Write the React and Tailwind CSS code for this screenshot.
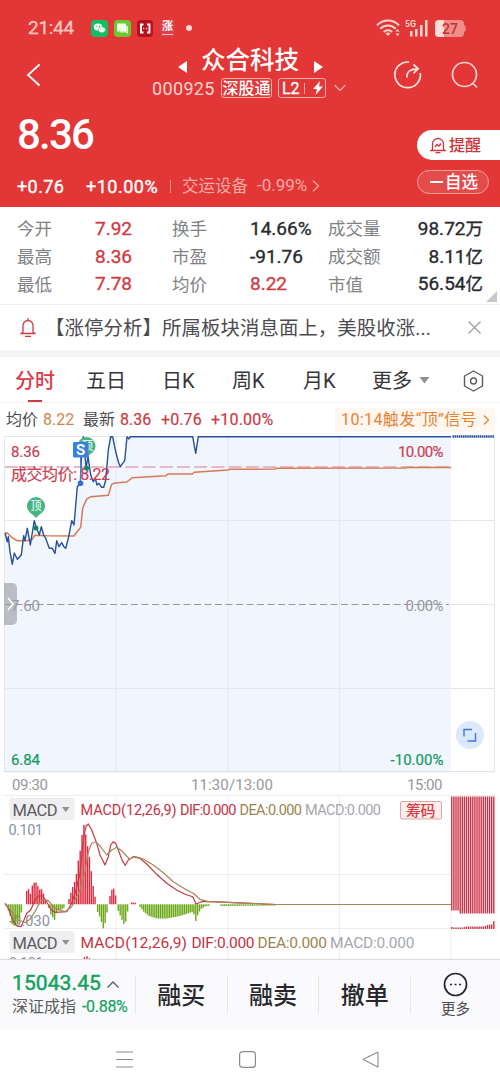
const gridX = [116, 228, 339.5, 451];

const priceLine =
  "5,533 7.3,541.7 8.3,536.7 10,551.7 12.3,564.3 14.3,553 17.3,559.3 21.3,555 23.7,535.7 25,540.7 27.3,528.3 30.3,545 34.3,520.7 36,526.7 39.3,535 41.3,526.7 43.7,535 45.7,538.3 49.3,548.3 52.3,548.3 55,553.3 56.7,540.7 59,546.7 61.7,542.7 64.3,547.3 65.7,548.3 68.7,536.7 71.7,520.7 74,525 77.3,486.7 80.3,483 81.7,450 83.3,436.7 86,468 88,456.7 90.7,475 93.3,481.7 95.3,478.3 97,485 99,483.3 101.7,487.3 103.7,487.3 105.7,480 108.3,450 110.7,436.7 112.7,437 115.7,451.7 118.3,461.7 120.3,466.7 124.7,460.7 127,436.7 129,439 130.3,436.7 192.7,436.7 195.7,453.3 198.3,436.7 451,436.7";

const avgLine =
  "5,533 7,532.7 11.7,537.3 17.3,540.7 26.7,540.7 32.3,539.3 34.7,535.3 46.7,535.7 74,536 76,533.3 80.7,527.3 82.7,508.3 86.7,499 90.7,496.7 108.3,495.3 111.7,484.3 115,483 126.7,482 132.3,477.7 166,475.7 167.7,474 192.3,474 194.3,472.3 228,470 230,469.3 275,469 277,468.3 405,468 407,467.5 451,467.5";

const difLine =
  "5,903.3 8.3,908.3 12.7,920 16.7,926 21,926.7 23.3,921.7 26.7,913.3 30.7,910 35,900 38.3,896 42.7,896 46.7,901.7 50.7,909.3 55,912.3 66.7,911.7 71.7,903.3 76,890 80,873.3 83.3,840 86,826 88.3,824 91.7,830 96.7,843.3 100,855 105,865 108.3,856.7 110.7,845 113.3,841.7 115.7,843.3 118.3,850 122.3,860.7 125.3,865.3 128.3,860 133.3,856.7 140,858.3 146.7,864 156.7,874.3 166.7,883.3 176.7,890 185,894.3 192.7,896.7 196,904 201.7,901.7 213.3,901.7 250,903.3 276,904.5";

const deaLine =
  "5,903.3 11.7,911.7 18.3,920 25,922.7 30,919.3 35,911.7 39.3,903.3 43.3,899.3 48.3,900.7 55,908.3 65,911.7 71.7,906.7 80,890 85,871.7 88.3,851.7 91.7,843.3 96,842 100,846 106.7,855 111.7,850 116.7,847.3 121.7,850.7 129.3,859 135,856.7 143.3,859 153.3,865 163.3,872.7 173.3,881.7 186.7,890 193.3,893.3 200,899.3 208.3,901.7 250,903.3 276,904.5 451,904.5";

// MACD histogram: each group is a list of [x, end y] around the zero line
const zeroY = 904.3;
const histogram = [
  [[6.5, 906], [10, 915], [12.5, 926], [18, 924], [20, 917], [23, 907]],
  [[26.7, 891], [28.5, 889], [30.5, 894], [32, 886], [35.3, 881], [38.3, 887], [40, 890], [42, 889], [45.5, 900]],
  [[49, 908], [51, 915], [54.7, 920], [57, 911], [61, 910], [65, 907]],
  [[69, 899], [72, 889], [76, 878], [77.3, 866], [81, 846], [82.3, 832], [84.5, 822], [86, 837], [90, 860], [92, 877], [94, 892], [96, 901]],
  [[97.7, 912], [101, 920], [102.7, 928], [104.3, 929], [106, 917], [108, 908]],
  [[110, 896], [113, 886], [116, 897]],
  [[118.3, 911], [120, 915], [123.7, 924], [125.5, 923], [127, 913], [129, 908]],
  [[131.5, 902.5], [137, 902.8]],
  [[140, 907], [144, 912], [149, 916], [157, 918.5], [167, 918.5], [180, 916], [192, 912], [194.5, 915], [196, 922], [198, 914], [201, 909], [205, 906.5], [209, 905.8]],
  [[221, 906], [276, 905.5]],
];

const bars = histogram.flatMap((group) => {
  const result = [];
  const last = group[group.length - 1][0];
  for (let x = group[0][0]; x <= last; x += 1.86) {
    const i = Math.max(1, group.findIndex((p) => p[0] >= x));
    const [x0, y0] = group[i - 1];
    const [x1, y1] = group[i];
    result.push([x, y0 + ((x - x0) / (x1 - x0)) * (y1 - y0)]);
  }
  return result;
});

const auctionBars = Array.from({ length: 21 }, (_, i) => 451.6 + i * 2.1);
const auctionSmall = [2, 1.5, 1.5, 1.5, 1.5, 1.5, 2, 2.5, 2.5, 2.5, 2.5, 2.5, 2.5, 2.5, 2.5, 2.5, 3, 4, 4.5, 4.5, 8];

const stats = [
  ["今开", "7.92", "换手", "14.66%", "成交量", "98.72万"],
  ["最高", "8.36", "市盈", "-91.76", "成交额", "8.11亿"],
  ["最低", "7.78", "均价", "8.22", "市值", "56.54亿"],
];

const StatusBar = () => (
  <div className="flex h-[56px] items-center pl-[28px] pr-[33px] text-[#ffc9c2]">
    <span className="w-[63px] pt-px text-[19px] tracking-[-0.3px] [-webkit-text-stroke:0.3px]">21:44</span>
    <div className="flex items-center gap-[6px]">
      <svg width="17" height="17" viewBox="0 0 17 17">
        <rect width="17" height="17" rx="4" fill="#12bf64" />
        <ellipse cx="7" cy="7" rx="4.2" ry="3.5" fill="#fff" />
        <ellipse cx="10.8" cy="9.8" rx="3.6" ry="3" fill="#fff" stroke="#12bf64" strokeWidth=".6" />
        <g fill="#12bf64">
          <circle cx="5.6" cy="6.2" r=".6" />
          <circle cx="8.4" cy="6.2" r=".6" />
          <circle cx="9.7" cy="9.1" r=".5" />
          <circle cx="12" cy="9.1" r=".5" />
        </g>
      </svg>
      <svg width="17" height="17" viewBox="0 0 17 17">
        <rect width="17" height="17" rx="4" fill="#6cc832" />
        <path d="M6 6h8v8l-2-1.5H6z" fill="#d5f3bd" />
        <path d="M3 3.5h9v7H6L3.800 12.500V10.500H3z" fill="#f4ffec" />
      </svg>
      <svg width="17" height="17" viewBox="0 0 17 17">
        <rect width="16" height="17" rx="4" fill="#b9101e" />
        <path d="M6.500 4.500H4v8h2.500M10 4.500h2.500v8H10" fill="none" stroke="#fff" strokeWidth="1.900" />
        <path d="M6.300 8.500h1M9.300 8.500h1" stroke="#fff" strokeWidth="1.500" />
      </svg>
      <div className="flex h-[17px] w-[15px] flex-col items-center rounded bg-[#dc404b] text-white">
        <span className="text-[11px] leading-[13px] font-bold">涨</span>
        <span className="mt-px h-px w-[11px] bg-[#f7c4c4]" />
      </div>
      <span className="ml-[5px] size-[6px] rounded-full bg-[#ffd9d4]" />
    </div>
    <div className="ml-auto flex items-center">
      <svg width="25" height="18" viewBox="0 0 25 18" fill="none" stroke="#ffd5cf" strokeWidth="2">
        <path d="M1 6.300C7-.2 17-.2 23 6.300M4.200 9.800c4.200-4.300 11.200-4.300 15.500 0M7.700 13c2.400-2.300 6.200-2.300 8.500 0" />
        <path d="M9.500 14.300L12 17l2.500-2.700c-1.500-1.200-3.500-1.200-5 0z" fill="#ffd5cf" stroke="none" />
        <path d="M21.500 10l2.200 2.600h-4.400zM21.500 17l2.200-2.600h-4.400z" fill="#ffd5cf" stroke="none" />
      </svg>
      <svg className="ml-[4px]" width="24" height="18" viewBox="0 0 24 18" fill="#ffd5cf">
        <text x="0" y="7.500" fontSize="9.500" fontWeight="600" textLength="11" lengthAdjust="spacingAndGlyphs">5G</text>
        <path d="M5 12h2.500v5.500H5zM10 10h2.500v7.500H10zM15 6h2.500v11.500H15zM20 1h2.500v16.500H20z" />
      </svg>
      <svg className="ml-[6px]" width="32" height="17" viewBox="0 0 32 17">
        <path d="M28.500 5c3 0 3 7 0 7z" fill="#f08d89" />
        <rect width="29" height="17" rx="4" fill="#f08d89" />
        <path d="M4 0h5v17H4a4 4 0 0 1-4-4V4a4 4 0 0 1 4-4z" fill="#ffdcd7" />
        <text x="7" y="13.500" fontSize="14" fontWeight="500" fill="#bd3239">27</text>
      </svg>
    </div>
  </div>
);

const Header = () => (
  <header className="h-[207px] bg-[#e33637] text-white">
    <StatusBar />
    <div className="-mt-[11px] flex h-[60px]">
      <svg className="mt-[18px] ml-[25px]" width="18" height="24" viewBox="0 0 18 24" fill="none" stroke="#fff" strokeWidth="1.800">
        <path d="M14.500 1.500L3 12l11.500 10.500" />
      </svg>
      <div className="ml-[109px] flex w-[196px] flex-col">
        <div className="flex h-[31px] items-center pl-[26px]">
          <svg className="mt-[13px]" width="9" height="12" viewBox="0 0 9 12" fill="#fff"><path d="M9 0v12L0 6z" /></svg>
          <span className="ml-[14px] w-[99px] pt-[1px] text-[24.5px] leading-[30px] font-medium">众合科技</span>
          <svg className="mt-[13px] ml-[14px]" width="9" height="12" viewBox="0 0 9 12" fill="#fff"><path d="M0 0v12l9-6z" /></svg>
        </div>
        <div className="flex h-[24px] items-center">
          <span className="w-[69px] text-[18px] tracking-[0.35px] text-[#ffd5d0]">000925</span>
          <span className="flex h-[20px] w-[51px] items-center justify-center rounded-[3px] border border-[#f7b4ae] pt-[2px] text-[16px] leading-none font-medium">深股通</span>
          <span className="ml-[6px] flex h-[20px] w-[48px] items-center rounded-[3px] border border-[#f7b4ae] pl-[3px] text-[16px] [-webkit-text-stroke:0.3px]">
            <span className="w-[19px] pt-px">L2</span>
            <span className="ml-[3px] h-[11px] w-px bg-[#f3a29d]" />
            <svg className="ml-[8px]" width="10" height="14" viewBox="0 0 10 14" fill="#fff"><path d="M7 0L0 8h4L2.500 14 10 5.500H6z" /></svg>
          </span>
          <svg className="ml-[8px]" width="12" height="8" viewBox="0 0 12 8" fill="none" stroke="#f3a29d" strokeWidth="1.300"><path d="M.5 1L6 6.500 11.500 1" /></svg>
        </div>
      </div>
      <svg className="mt-[15px] ml-[45px]" width="30" height="30" viewBox="0 0 30 30" fill="none" stroke="#ffe4e0" strokeWidth="1.700">
        <path d="M16 2.100A12.800 12.800 0 1 0 27.300 13" />
        <path d="M14 17.500c-.6-6 4-8.700 11-8.700M20.500 4.500l4.700 4.300-4.700 4.300" />
      </svg>
      <svg className="mt-[15px] ml-[28px]" width="30" height="30" viewBox="0 0 30 30" fill="none" stroke="#ffd5d0" strokeWidth="1.700">
        <circle cx="13.500" cy="14.500" r="12" />
        <path d="M21.500 23l4.500 4.500" />
      </svg>
    </div>
    <div className="flex h-[102px] justify-between">
      <div className="pl-[17px]">
        <div className="mt-[7px] h-[46px] text-[42px] leading-[46px] font-medium tracking-[-1.8px]">8.36</div>
        <div className="mt-[17px] flex h-[22px] items-center text-[18px] whitespace-nowrap">
          <span className="w-[69px] tracking-[0.4px] [-webkit-text-stroke:0.4px]">+0.76</span>
          <span className="w-[84px] tracking-[0.5px] [-webkit-text-stroke:0.4px]">+10.00%</span>
          <span className="h-[13px] w-px bg-[#f08884]" />
          <span className="ml-[11px] w-[75px] pt-[2px] text-[16.500px] text-[#f9aca6]">交运设备</span>
          <span className="w-[55px] text-[17px] text-[#f9aca6]">-0.99%</span>
          <svg width="8" height="12" viewBox="0 0 8 12" fill="none" stroke="#f9aca6" strokeWidth="1.200"><path d="M1 .8L6.500 6 1 11.200" /></svg>
        </div>
      </div>
      <div className="w-[83px] pt-[25px]">
        <div className="flex h-[30px] items-center rounded-l-full bg-white pl-[13px] text-[16px] font-medium text-[#c9353a]">
          <svg className="mr-[3px]" width="16" height="17" viewBox="0 0 16 17" fill="none" stroke="#c9353a" strokeWidth="1.300">
            <path d="M2.500 12.500V7a5.500 5.500 0 0 1 11 0v5.500l1.500 1H1zM5.500 15.700h5M5 10l2-2.500 2 1.500 2-2.500" />
          </svg>
          <span className="pt-[2px]">提醒</span>
        </div>
        <div className="mt-[10px] flex h-[24px] w-[72px] items-center rounded-full border border-[#f29c98] bg-[#e44c4c] pl-[12px] text-[16.5px] font-medium">
          <span className="mr-[2px] h-[1.500px] w-[13px] bg-white" />
          <span className="pt-[2px]">自选</span>
        </div>
      </div>
    </div>
  </header>
);

const Stats = () => (
  <section className="relative h-[98px] border-b border-[#f1f1f3] pt-[8.5px]">
    {stats.map((row, i) => (
      <div key={row[0]} className="flex h-[27.7px] items-center pr-[17px] pl-[17px] text-[19px] text-[#2a2a2e]">
        <span className="w-[78px] text-[17.5px] text-[#828286]">{row[0]}</span>
        <span className="w-[77px] text-[#cf3a43] [-webkit-text-stroke:0.35px]">{row[1]}</span>
        <span className="w-[78px] text-[17.5px] text-[#828286]">{row[2]}</span>
        <span className={i === 2 ? "w-[78px] text-[#cf3a43] [-webkit-text-stroke:0.35px]" : "w-[78px] [-webkit-text-stroke:0.35px]"}>{row[3]}</span>
        <span className="w-[54px] text-[17.5px] text-[#828286]">{row[4]}</span>
        <span className="flex-1 text-right [-webkit-text-stroke:0.35px]">
          {row[5].slice(0, -1)}
          <span className="text-[17.5px]">{row[5].slice(-1)}</span>
        </span>
      </div>
    ))}
    <svg className="absolute right-[3px] bottom-[2px]" width="11" height="11" viewBox="0 0 11 11" fill="#c8c8cb"><path d="M11 0v11H0z" /></svg>
  </section>
);

const News = () => (
  <section className="flex h-[52px] items-center border-b-[7px] border-[#f5f5f7] text-[#4c4c50]">
    <svg className="ml-[20px]" width="16" height="19" viewBox="0 0 16 19" fill="none" stroke="#cf3a43" strokeWidth="1.300">
      <path d="M3 14V7.500a5 5 0 0 1 10 0V14l1.800 1.500H1.200zM8 0v2.500M5 18.300h6" />
    </svg>
    <span className="ml-[9px] w-[388px] pt-[2px] text-[19.4px] tracking-[0.1px] whitespace-nowrap">【涨停分析】所属板块消息面上，美股收涨...</span>
    <svg className="ml-[35px]" width="13" height="13" viewBox="0 0 13 13" stroke="#9a9a9e" strokeWidth="1.100"><path d="M.5.5l12 12M12.500.5l-12 12" /></svg>
  </section>
);

const Tabs = () => (
  <nav className="flex h-[46px] items-center border-b border-[#f4f4f6] pt-[2px] pl-[15px] text-[20px] text-[#36363a]">
    <span className="relative w-[71px] font-medium text-[#dc3a4a]">
      分时
      <i className="absolute -bottom-[6px] left-[13px] h-[2px] w-[14px] bg-[#cf3a43]" />
    </span>
    <span className="w-[76px]">五日</span>
    <span className="w-[70px]">日K</span>
    <span className="w-[71px]">周K</span>
    <span className="w-[69px]">月K</span>
    <span>更多</span>
    <svg className="ml-[7px]" width="11" height="7" viewBox="0 0 11 7" fill="#909094"><path d="M.5 0h10L5.500 6.500z" /></svg>
    <svg className="ml-[33px]" width="21" height="22" viewBox="0 0 21 22" fill="none" stroke="#5c5c60" strokeWidth="1.400">
      <path d="M10.500 1l9 5v10l-9 5-9-5V6z" strokeLinejoin="round" />
      <circle cx="10.500" cy="11" r="3" />
    </svg>
  </nav>
);

const PriceInfo = () => (
  <div className="flex h-[31px] items-center pt-[2px] pr-[5px] pl-[6px] text-[16px] whitespace-nowrap">
    <span className="w-[37px] text-[#4c4c50]">均价</span>
    <span className="w-[40px] text-[#cc8550]">8.22</span>
    <span className="w-[37px] text-[#4c4c50]">最新</span>
    <span className="w-[41px] text-[#cc3a45] [-webkit-text-stroke:0.2px]">8.36</span>
    <span className="w-[50px] tracking-[0.1px] text-[#cc3a45] [-webkit-text-stroke:0.2px]">+0.76</span>
    <span className="tracking-[0.2px] text-[#cc3a45] [-webkit-text-stroke:0.2px]">+10.00%</span>
    <span className="ml-auto flex h-[24px] w-[160px] items-center bg-[#fff7f0] pl-[6px] text-[16px] text-[#e88132]">
      <span className="w-[137px] tracking-[0.4px]">10:14触发“顶”信号</span>
      <svg className="ml-[5px]" width="7" height="10" viewBox="0 0 7 10" fill="none" stroke="#e88132" strokeWidth="1.200"><path d="M1 .5L5.500 5 1 9.500" /></svg>
    </span>
  </div>
);

const PriceChart = () => (
  <svg className="block" width="500" height="361" viewBox="0 434 500 361" fontSize="15">
    <polygon points={`${priceLine} 451,772 5,772`} fill="#f1f5fe" />
    <g stroke="#e4e7f0" strokeWidth="1">
      {gridX.slice(0, 3).map((x) => <path key={x} d={`M${x} 437V772`} />)}
      <path d="M4.500 436.500H494.500M4.500 520.500H494.500M451 604.500H494.500M4.500 688.500H494.500" />
      <path d="M4.500 436V772M494.500 436V772" />
    </g>
    <path d="M4 771.700H495" stroke="#dadce2" />
    <path d="M5 467H451" stroke="#e2a3b6" strokeWidth="1.300" strokeDasharray="13 4.200" />
    <path d="M5 604.500H449" stroke="#96979d" strokeWidth="1.200" strokeDasharray="7 3.500" />
    <polyline points={avgLine} fill="none" stroke="#d97a56" strokeWidth="1.500" />
    <polyline points={priceLine} fill="none" stroke="#25509a" strokeWidth="1.400" strokeLinejoin="round" />
    <path d="M452.500 436.500H494.500" stroke="#25509a" strokeWidth="2.400" strokeDasharray="1.500 .6" />

    <g fill="#cb3f52" stroke="#cb3f52" strokeWidth=".2">
      <text x="11" y="457" textLength="29">8.36</text>
      <text x="11" y="480" fontSize="16" textLength="99">成交均价: 8.22</text>
      <text x="398" y="457" textLength="45.500">10.00%</text>
    </g>
    <g fill="#96979d">
      <text x="11" y="611" textLength="29">7.60</text>
      <text x="405.500" y="611" textLength="38">0.00%</text>
      <text x="12" y="789.500" textLength="36">09:30</text>
      <text x="191" y="789.500" textLength="82">11:30/13:00</text>
      <text x="407" y="789.500" textLength="35.500">15:00</text>
    </g>
    <g fill="#159a5e" stroke="#159a5e" strokeWidth=".2">
      <text x="11" y="764.500" textLength="29">6.84</text>
      <text x="390.500" y="764.500" textLength="53">-10.00%</text>
    </g>

    {/* signal pins */}
    <g fill="#43b586">
      <circle cx="36" cy="506" r="9" />
      <path d="M31 513h10l-5 5z" />
      <circle cx="86.500" cy="446" r="9" />
      <path d="M82 453h9l-4.500 5z" />
    </g>
    <g fill="#fff" fontSize="11" textAnchor="middle">
      <text x="36" y="510">顶</text>
      <text x="87.500" y="450">顶</text>
    </g>
    <circle cx="36" cy="528" r="2.500" fill="#15875f" />
    <circle cx="86.500" cy="468" r="2.500" fill="#15875f" />
    <path d="M80.500 457V483" stroke="#3f7fe0" strokeWidth="1" />
    <circle cx="80.500" cy="483.300" r="2.800" fill="#3270dd" />
    <rect x="73" y="442" width="15.500" height="15.500" rx="1" fill="#3a80dc" />
    <text x="80.700" y="455" fontSize="15" fontWeight="700" fill="#fff" textAnchor="middle">S</text>

    {/* side drawer handle */}
    <path d="M4 583h8a5 5 0 0 1 5 5v32a5 5 0 0 1-5 5H4z" fill="#9c9ea5" fillOpacity=".65" />
    <path d="M8 598l5 6-5 6" fill="none" stroke="#fff" strokeWidth="1.600" />

    <circle cx="470" cy="735" r="14" fill="#dce8fb" />
    <path d="M464 736.500V729.500H472M467.500 741H475.500V733" fill="none" stroke="#3f78d8" strokeWidth="1.400" />
  </svg>
);

const MacdChart = () => (
  <svg className="block" width="500" height="164" viewBox="0 795 500 164" fontSize="15">
    <g stroke="#ededf0" strokeWidth="1">
      <path d="M4 795.500H495M4 874.500H451M4 928.500H451" />
      {gridX.map((x) => <path key={x} d={`M${x} 795V959`} />)}
    </g>
    <text x="8.500" y="835" fontSize="14.500" fill="#8594a5" textLength="34.500">0.101</text>
    <text x="9" y="925.500" fontSize="14.500" fill="#8594a5" textLength="41">-0.030</text>

    {bars.map(([x, y]) => (
      <rect key={x} x={x - 0.7} y={Math.min(y, zeroY)} width="1.4" height={Math.abs(y - zeroY)} fill={y < zeroY ? "#dc2c40" : "#69a714"} />
    ))}
    <polyline points={difLine} fill="none" stroke="#c23a44" strokeWidth="1.200" strokeLinejoin="round" />
    <polyline points={deaLine} fill="none" stroke="#a8865a" strokeWidth="1.200" strokeLinejoin="round" />

    {auctionBars.map((x, i) => (
      <g key={x} fill="#cb3448">
        <rect x={x - 0.5} y="796.500" width="1.4" height={i < 4 ? 114 : 117} />
        <rect x={x - 0.5} y={929 - auctionSmall[i]} width="1.4" height={auctionSmall[i]} />
      </g>
    ))}

    <rect x="9.500" y="798" width="65" height="22" rx="2" fill="#efeff1" />
    <rect x="9.500" y="931" width="65" height="22" rx="2" fill="#efeff1" />
    <g fill="#5c5c60" fontSize="16.500">
      <text x="12.500" y="815.500" textLength="45">MACD</text>
      <text x="12.500" y="949" textLength="45">MACD</text>
    </g>
    <path d="M62 807h7.500l-3.750 5zM62 940h7.500l-3.750 5z" fill="#909094" />

    <g fontSize="14.500">
      <text x="80.500" y="814.800" fill="#c5333f" textLength="96">MACD(12,26,9)</text>
      <text x="180" y="814.800" fill="#c5333f" textLength="56.500">DIF:0.000</text>
      <text x="239.500" y="814.800" fill="#9d8350" textLength="62.500">DEA:0.000</text>
      <text x="305" y="814.800" fill="#a5a7ad" textLength="76">MACD:0.000</text>
    </g>
    <g fontSize="15.500">
      <text x="80.500" y="948.300" fill="#c5333f" textLength="106.500">MACD(12,26,9)</text>
      <text x="191.500" y="948.300" fill="#c5333f" textLength="63">DIF:0.000</text>
      <text x="257.500" y="948.300" fill="#9d8350" textLength="69.500">DEA:0.000</text>
      <text x="330" y="948.300" fill="#a5a7ad" textLength="84.500">MACD:0.000</text>
    </g>
    <rect x="400.500" y="801.500" width="41" height="17.500" rx="1.500" fill="#fdeeee" stroke="#e2a3a6" />
    <text x="406" y="816" fontSize="15" fontWeight="500" fill="#d63b42" textLength="29.500">筹码</text>

    {/* top of the next panel, cut off by the toolbar */}
    <text x="9" y="968" fontSize="14.500" fill="#8594a5" textLength="34.500">0.101</text>
    <path d="M84.500 957v2M87 956v3M89.500 958v1" stroke="#c23a44" strokeWidth="1.300" />
  </svg>
);

const Toolbar = () => (
  <footer className="flex h-[70px] items-center border-t border-[#dcdce0] bg-[#fafafc] text-[#28282c]">
    <div className="w-[135px] pl-[12px] whitespace-nowrap">
      <div className="flex h-[24px] items-center text-[21px] text-[#16a25f]">
        <span className="w-[95px] tracking-[0.1px] [-webkit-text-stroke:0.5px]">15043.45</span>
        <svg width="12" height="7" viewBox="0 0 12 7" fill="none" stroke="#5c5c60" strokeWidth="1.300"><path d="M.5 6.500L6 1l5.500 5.500" /></svg>
      </div>
      <div className="flex h-[21px] items-center text-[16px]">
        <span className="w-[70px] text-[#5c5c60]">深证成指</span>
        <span className="tracking-[-0.3px] text-[#16a25f] [-webkit-text-stroke:0.2px]">-0.88%</span>
      </div>
    </div>
    {["融买", "融卖", "撤单"].map((label) => (
      <div key={label} className="flex h-[39px] w-[91.7px] items-center justify-center border-l border-[#e6e6ea] pt-[2px] text-[24px] font-medium">
        {label}
      </div>
    ))}
    <div className="flex h-[39px] flex-1 flex-col items-center justify-center border-l border-[#e6e6ea] pt-[3px] text-[14.5px] text-[#4c4c50]">
      <svg className="shrink-0" width="25" height="25" viewBox="0 0 25 25" fill="none" stroke="#28282c" strokeWidth="1.700">
        <circle cx="12.500" cy="12.500" r="11" />
        <path d="M7 12.500h2M11.500 12.500h2M16 12.500h2" />
      </svg>
      <span className="mt-[2px] leading-[21px]">更多</span>
    </div>
  </footer>
);

const SystemNav = () => (
  <div className="flex h-[61px] items-center pl-[116px]">
    <svg width="17" height="17" viewBox="0 0 17 17" stroke="#8c8c90" strokeWidth="1.100"><path d="M0 1h17M0 8.500h17M0 16h17" /></svg>
    <svg className="ml-[106px]" width="17" height="17" viewBox="0 0 17 17" fill="none" stroke="#8c8c90" strokeWidth="1.200"><rect x=".6" y=".6" width="15.800" height="15.800" rx="3" /></svg>
    <svg className="ml-[106px]" width="17" height="17" viewBox="0 0 17 17" fill="none" stroke="#8c8c90" strokeWidth="1.100" strokeLinejoin="round"><path d="M16 1v15L1 8.500z" /></svg>
  </div>
);

const App = () => (
  <div className="h-[1090px] w-[500px] overflow-hidden bg-white font-[Roboto,'Noto_Sans_CJK_SC',sans-serif]">
    <Header />
    <Stats />
    <News />
    <Tabs />
    <PriceInfo />
    <PriceChart />
    <MacdChart />
    <Toolbar />
    <SystemNav />
  </div>
);

export default App;
